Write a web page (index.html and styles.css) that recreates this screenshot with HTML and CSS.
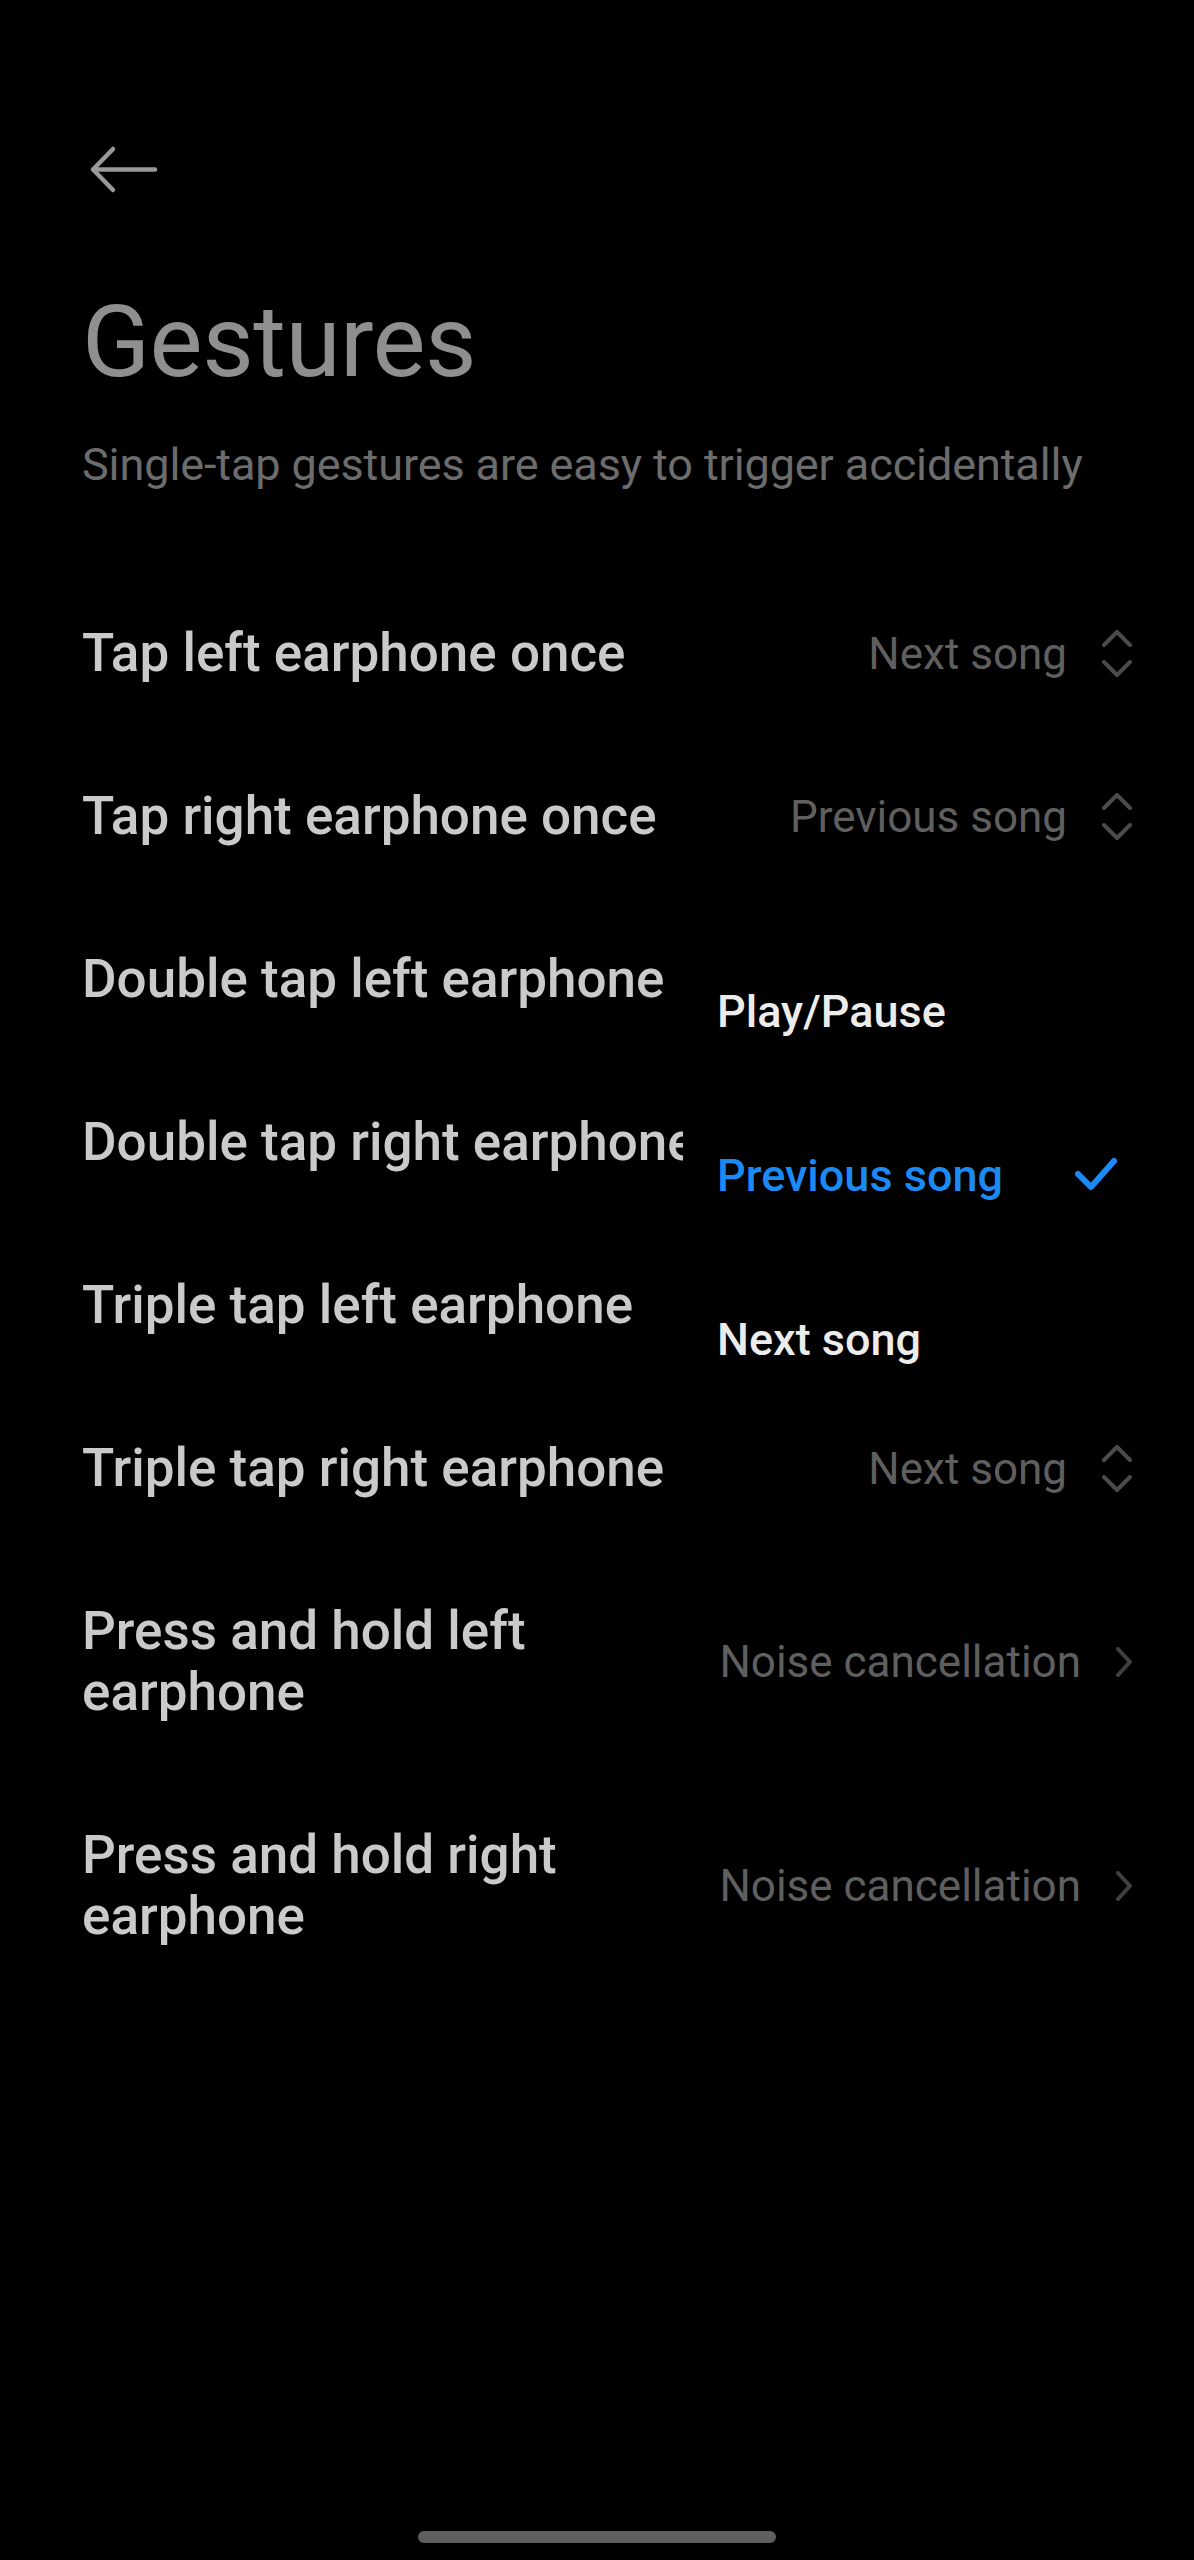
FILE: index.html
```html
<!DOCTYPE html>
<html lang="en">
<head>
<meta charset="utf-8">
<title>Gestures</title>
<link rel="stylesheet" href="styles.css">
</head>
<body>
<div class="page">
  <header class="header">
    <svg class="back" width="72" height="52" viewBox="0 0 72 52" aria-label="Back">
      <path d="M5 25.5 H67 M25 5 L5 25.5 L25 46" fill="none" stroke="#999999" stroke-width="4.5" stroke-linecap="round" stroke-linejoin="round"/>
    </svg>
    <h1 class="title">Gestures</h1>
    <p class="subtitle">Single-tap gestures are easy to trigger accidentally</p>
  </header>

  <ul class="list">
    <li class="row">
      <span class="row-title">Tap left earphone once</span>
      <span class="row-value">Next song</span>
      <svg class="updown" width="30" height="48" viewBox="0 0 30 48"><path d="M2 15 L15 2 L28 15 M2 32 L15 45 L28 32" fill="none" stroke="#4b4b4b" stroke-width="4" stroke-linecap="round" stroke-linejoin="round"/></svg>
    </li>
    <li class="row">
      <span class="row-title">Tap right earphone once</span>
      <span class="row-value">Previous song</span>
      <svg class="updown" width="30" height="48" viewBox="0 0 30 48"><path d="M2 15 L15 2 L28 15 M2 32 L15 45 L28 32" fill="none" stroke="#4b4b4b" stroke-width="4" stroke-linecap="round" stroke-linejoin="round"/></svg>
    </li>
    <li class="row">
      <span class="row-title clip">Double tap left earphone</span>
    </li>
    <li class="row">
      <span class="row-title clip">Double tap right earphone</span>
    </li>
    <li class="row">
      <span class="row-title clip">Triple tap left earphone</span>
    </li>
    <li class="row">
      <span class="row-title">Triple tap right earphone</span>
      <span class="row-value">Next song</span>
      <svg class="updown" width="30" height="48" viewBox="0 0 30 48"><path d="M2 15 L15 2 L28 15 M2 32 L15 45 L28 32" fill="none" stroke="#4b4b4b" stroke-width="4" stroke-linecap="round" stroke-linejoin="round"/></svg>
    </li>
    <li class="row">
      <span class="row-title">Press and hold left earphone</span>
      <span class="row-value">Noise cancellation</span>
      <svg class="chevron" width="16" height="30" viewBox="0 0 16 30"><path d="M2 2 L14 15 L2 28" fill="none" stroke="#404040" stroke-width="4" stroke-linecap="round" stroke-linejoin="round"/></svg>
    </li>
    <li class="row">
      <span class="row-title">Press and hold right earphone</span>
      <span class="row-value">Noise cancellation</span>
      <svg class="chevron" width="16" height="30" viewBox="0 0 16 30"><path d="M2 2 L14 15 L2 28" fill="none" stroke="#404040" stroke-width="4" stroke-linecap="round" stroke-linejoin="round"/></svg>
    </li>
  </ul>

  <div class="popup" role="listbox">
    <div class="popup-item">Play/Pause</div>
    <div class="popup-item selected">
      <span>Previous song</span>
      <svg class="check" width="44" height="38" viewBox="0 0 44 38"><path d="M4 18 L17 31 L40 5" fill="none" stroke="#1b8af5" stroke-width="6" stroke-linecap="round" stroke-linejoin="round"/></svg>
    </div>
    <div class="popup-item">Next song</div>
  </div>
</div>
<div class="home-bar"></div>
</body>
</html>
```
FILE: styles.css
```css
* {
  box-sizing: border-box;
}

html, body {
  margin: 0;
  padding: 0;
  background: #000000;
}

body {
  width: 1194px;
  height: 2560px;
  position: relative;
  overflow: hidden;
  font-family: Roboto, "Noto Sans", "Liberation Sans", sans-serif;
}

.page {
  padding: 0 62px 0 82px;
}

.header {
  display: flex;
  flex-direction: column;
}

.back {
  display: block;
  margin: 144px 0 0 6px;
}

.title {
  margin: 86px 0 0 0;
  font-size: 100px;
  line-height: 120px;
  font-weight: 400;
  color: #8f8f8f;
  letter-spacing: -0.5px;
}

.subtitle {
  margin: 35px 0 0 0;
  font-size: 45px;
  line-height: 56px;
  font-weight: 400;
  color: #6c6c6c;
  letter-spacing: -0.1px;
}

.list {
  list-style: none;
  margin: 79px 0 0 0;
  padding: 0;
}

.row {
  display: flex;
  align-items: center;
  padding: 51px 0;
  min-height: 163px;
}

.row-title {
  flex: 1 1 auto;
  min-width: 0;
  font-size: 53px;
  line-height: 61px;
  font-weight: 500;
  color: #cacaca;
  padding-right: 40px;
}

.row-title.clip {
  flex: 0 0 auto;
  max-width: 601px;
  padding-right: 0;
  white-space: nowrap;
  overflow: hidden;
}

.row-value {
  flex: 0 0 auto;
  font-size: 44px;
  line-height: 56px;
  font-weight: 400;
  color: #5f5f5f;
  margin-right: 35px;
}

.updown,
.chevron {
  flex: 0 0 auto;
  display: block;
}

.popup {
  position: absolute;
  left: 683px;
  top: 917px;
  width: 477px;
  padding: 12px 42px 12px 34px;
  background: #000000;
}

.popup-item {
  display: flex;
  align-items: center;
  justify-content: space-between;
  height: 164px;
  font-size: 45px;
  font-weight: 500;
  color: #ececec;
}

.popup-item.selected {
  color: #1b8af5;
}

.check {
  display: block;
}

.home-bar {
  position: absolute;
  left: 418px;
  top: 2531px;
  width: 358px;
  height: 12px;
  border-radius: 6px;
  background: #5f5f5f;
}
```
